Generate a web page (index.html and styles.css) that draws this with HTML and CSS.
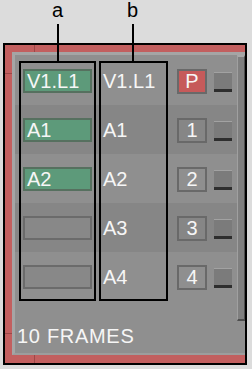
FILE: index.html
```html
<!DOCTYPE html>
<html lang="en">
<head>
    <meta charset="UTF-8">
    <meta name="viewport" content="width=device-width, initial-scale=1.0">
    <title>Track Patch Panel</title>
    <link rel="stylesheet" href="styles.css">
</head>
<body>
    <div class="labels">
        <span class="tag tag-a">a</span>
        <span class="tag tag-b">b</span>
    </div>

    <div class="frame">
        <div class="panel">
            <div class="main">
                <div class="list">
                    <div class="row">
                        <span class="slot on">V1.L1</span>
                        <span class="name">V1.L1</span>
                        <span class="num rec">P</span>
                        <span class="btn"></span>
                    </div>
                    <div class="row dark">
                        <span class="slot on">A1</span>
                        <span class="name">A1</span>
                        <span class="num">1</span>
                        <span class="btn"></span>
                    </div>
                    <div class="row">
                        <span class="slot on">A2</span>
                        <span class="name">A2</span>
                        <span class="num">2</span>
                        <span class="btn"></span>
                    </div>
                    <div class="row dark">
                        <span class="slot"></span>
                        <span class="name">A3</span>
                        <span class="num">3</span>
                        <span class="btn"></span>
                    </div>
                    <div class="row">
                        <span class="slot"></span>
                        <span class="name">A4</span>
                        <span class="num">4</span>
                        <span class="btn"></span>
                    </div>

                    <!-- callout outlines -->
                    <div class="outline outline-a"></div>
                    <div class="outline outline-b"></div>
                </div>
                <div class="footer">10 FRAMES</div>
            </div>
            <div class="scrollbar"></div>
        </div>
    </div>
</body>
</html>
```

FILE: styles.css
```css
body {
    margin: 0;
    padding: 0;
    background-color: #dcdcdc;
    font-family: "Liberation Sans", Arial, sans-serif;
}
.labels {
    height: 43px;
    display: flex;
    align-items: flex-start;
}
.tag {
    width: 21px;
    text-align: center;
    font-size: 20px;
    line-height: 20px;
    color: #000;
}
.tag-a {
    margin-left: 47px;
}
.tag-b {
    margin-left: 54px;
}
.frame {
    margin-left: 3px;
    width: 244px;
    height: 322px;
    box-sizing: border-box;
    border: 2px solid #000;
    padding: 7px 0 8px 7px;
    background-color: #c25f5f;
    background-image:
        linear-gradient(to right, transparent 29px, #9c4848 29px, #9c4848 30px, transparent 30px),
        linear-gradient(to bottom, transparent 28px, #9c4848 28px, #9c4848 29px, transparent 29px),
        linear-gradient(to bottom, transparent 288px, #9c4848 288px, #9c4848 289px, transparent 289px);
}
.panel {
    height: 100%;
    box-sizing: border-box;
    border-top: 3px solid #a5a5a5;
    border-left: 3px solid #a5a5a5;
    border-bottom: 2px solid #9d9d9d;
    background-color: #8f8f8f;
    display: flex;
    align-items: flex-start;
}
.main {
    flex: 1;
}
.list {
    position: relative;
}
.row {
    height: 49px;
    box-sizing: border-box;
    padding: 1px 0 0 8px;
    display: flex;
    align-items: center;
    color: #f6f6f6;
    font-size: 20px;
}
.row:first-child {
    height: 50px;
    padding-top: 2px;
}
.row.dark {
    background-color: #868686;
}
.slot {
    width: 69px;
    height: 24px;
    box-sizing: border-box;
    margin-right: 11px;
    padding-left: 2px;
    border: 2px solid #6b6b6b;
    background-color: #888888;
    line-height: 20px;
}
.slot.on {
    background-color: #5d9a7a;
    border-color: #56705f;
}
.name {
    width: 74px;
    line-height: 20px;
}
.num {
    width: 30px;
    height: 25px;
    box-sizing: border-box;
    margin-right: 7px;
    border: 2px solid #696969;
    text-align: center;
    line-height: 21px;
}
.num.rec {
    background-color: #c65a5a;
}
.btn {
    width: 18px;
    height: 20px;
    margin-top: 2px;
    box-sizing: border-box;
    border-top: 1px solid #a2a2a2;
    border-bottom: 3px solid #2e2e2e;
    background-color: #7b7b7b;
}
.outline {
    position: absolute;
    top: 6px;
    height: 240px;
    box-sizing: border-box;
    border: 2px solid #000;
}
.outline::before {
    content: "";
    position: absolute;
    left: calc(50% - 1px);
    bottom: 100%;
    width: 2px;
    height: 39px;
    background-color: #000;
}
.outline-a {
    left: 4px;
    width: 77px;
}
.outline-b {
    left: 84px;
    width: 69px;
}
.outline-b::before {
    left: calc(50% - 2px);
}
.footer {
    margin-top: 24px;
    padding-left: 2px;
    color: #f6f6f6;
    font-size: 20px;
    line-height: 23px;
    letter-spacing: 0.7px;
}
.scrollbar {
    width: 8px;
    height: 266px;
    box-sizing: border-box;
    border-top: 2px solid #a8a8a8;
    border-left: 1px solid #a0a0a0;
    border-right: 1px solid #4e4e4e;
    border-bottom: 2px solid #4e4e4e;
    background-color: #7f7f7f;
}
```
